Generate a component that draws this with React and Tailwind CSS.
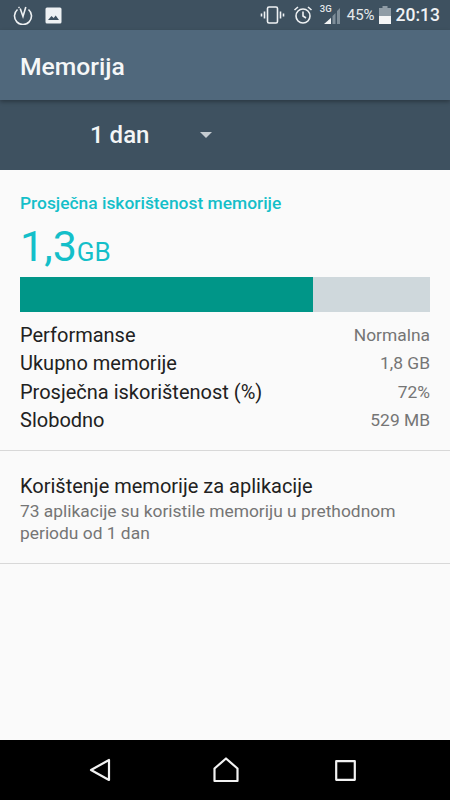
const rows = [
  ["Performanse", "Normalna"],
  ["Ukupno memorije", "1,8 GB"],
  ["Prosječna iskorištenost (%)", "72%"],
  ["Slobodno", "529 MB"],
];

const StatusBar = () => (
  <div className="h-[30px] bg-[#3e5160] flex items-center justify-between pl-[13px] pr-[10px] text-white">
    <div className="flex items-center gap-[12px]">
      <svg width="20" height="20" viewBox="0 0 20 20" fill="none" stroke="#eef1f3" strokeWidth="1.6">
        <path d="M4.5 4.5a8.5 8.5 0 1 0 11 0" />
        <path d="M7.2 3.5 10 11.5l2.8-9.5" />
        <path d="M5.5 2l1 .8" />
      </svg>
      <svg width="17" height="17" viewBox="0 0 17 17">
        <rect x="0.5" y="0.5" width="16" height="16" rx="1.5" fill="#eef1f3" />
        <path d="M3 13l3.5-4 2.2 2 2-2.5L14 13z" fill="#3e5160" />
      </svg>
    </div>
    <div className="flex items-center">
      <svg width="25" height="18" viewBox="0 0 25 18" fill="none" stroke="#eef1f3" strokeWidth="1.6">
        <rect x="7.5" y="1" width="10" height="16" rx="1.5" />
        <path d="M4.5 5.5v7M1.5 7.5v3M20.5 5.5v7M23.5 7.5v3" />
      </svg>
      <svg className="ml-[8px]" width="20" height="20" viewBox="0 0 20 20" fill="none" stroke="#eef1f3" strokeWidth="1.6">
        <circle cx="10" cy="11" r="7" />
        <path d="M10 6.5V11l3 2M1.5 5 5 2M18.5 5 15 2" />
      </svg>
      <div className="relative ml-[7px] w-[21px] h-[20px]">
        <span className="absolute left-0 top-[-1px] text-[9.5px] leading-[10px] font-medium text-[#e4e8eb]">3G</span>
        <svg className="absolute left-0 top-0" width="21" height="20" viewBox="0 0 21 20">
          <path d="M20 3v16h-3V6zM15.5 8v11h-3V11zM11 12.5V19H8v-3.5z" fill="#7f8e99" />
          <path d="M11 13v6H4z" fill="#f2f4f5" />
        </svg>
      </div>
      <span className="ml-[6px] text-[15px] text-[#e6eaec]">45%</span>
      <svg className="ml-[4px]" width="12" height="18" viewBox="0 0 12 18">
        <rect x="3.5" y="0" width="5" height="2" fill="#8f9ca6" />
        <rect x="0" y="2" width="12" height="16" fill="#8f9ca6" />
        <rect x="0" y="10" width="12" height="8" fill="#f4f5f6" />
      </svg>
      <span className="ml-[5px] text-[17.5px] font-medium text-[#f0f2f4]">20:13</span>
    </div>
  </div>
);

export default function App() {
  return (
    <div className="w-[450px] h-[800px] flex flex-col bg-[#fafafa] font-['Roboto',sans-serif] overflow-hidden">
      <StatusBar />
      <div className="h-[70px] bg-[#50687c] flex items-center pl-[20px] pt-[3px] shadow-[0_2px_4px_rgba(0,0,0,0.3)] relative">
        <span className="text-[24.7px] font-medium text-[#f5f7f8]">Memorija</span>
      </div>
      <div className="h-[70px] bg-[#3e5160] flex items-center pl-[90px]">
        <span className="text-[24px] font-medium text-[#f3f5f6]">1 dan</span>
        <span className="ml-[51px] w-0 h-0 border-x-[6.5px] border-x-transparent border-t-[6.5px] border-t-[#c5ccd1]"></span>
      </div>

      <div className="px-[20px] pt-[22px] pb-[16px] border-b border-[#d8d8d8]">
        <div className="text-[17.4px] leading-[22px] font-medium text-[#14bfc9]">Prosječna iskorištenost memorije</div>
        <div className="flex items-baseline h-[60px] pt-[7px] text-[#14bfc9]">
          <span className="text-[43px] leading-[50px]">1,3</span>
          <span className="text-[26px] leading-[50px]">GB</span>
        </div>
        <div className="flex h-[35px] mt-[3px] bg-[#cfd8dc]">
          <div className="w-[293px] bg-[#009688]"></div>
        </div>
        <div className="mt-[9px] text-[20px] leading-[28.3px] text-[#212121]">
          {rows.map(([label, value]) => (
            <div key={label} className="flex justify-between items-center">
              <span>{label}</span>
              <span className="text-[17.4px] text-[#757575]">{value}</span>
            </div>
          ))}
        </div>
      </div>

      <div className="px-[20px] pt-[23px] pb-[19px] border-b border-[#d8d8d8]">
        <div className="text-[20px] leading-[24px] text-[#212121]">Korištenje memorije za aplikacije</div>
        <div className="text-[17.4px] leading-[22px] text-[#757575] mt-[2px]">
          73 aplikacije su koristile memoriju u prethodnom periodu od 1 dan
        </div>
      </div>

      <div className="flex-1"></div>

      <div className="h-[60px] bg-black flex items-center pl-[89px]">
        <svg width="22" height="24" viewBox="0 0 22 24" fill="none" stroke="#f2f2f2" strokeWidth="2.2" strokeLinejoin="round">
          <path d="M20 2v20L2 12z" />
        </svg>
        <svg className="ml-[102px]" width="26" height="26" viewBox="0 0 26 26" fill="none" stroke="#f2f2f2" strokeWidth="2.2" strokeLinejoin="round">
          <path d="M1.5 11.5 13 1.5l11.5 10V24h-23z" />
        </svg>
        <svg className="ml-[96px]" width="21" height="21" viewBox="0 0 21 21" fill="none" stroke="#f2f2f2" strokeWidth="2.2" strokeLinejoin="round">
          <rect x="1.2" y="1.2" width="18.6" height="18.6" />
        </svg>
      </div>
    </div>
  );
}
